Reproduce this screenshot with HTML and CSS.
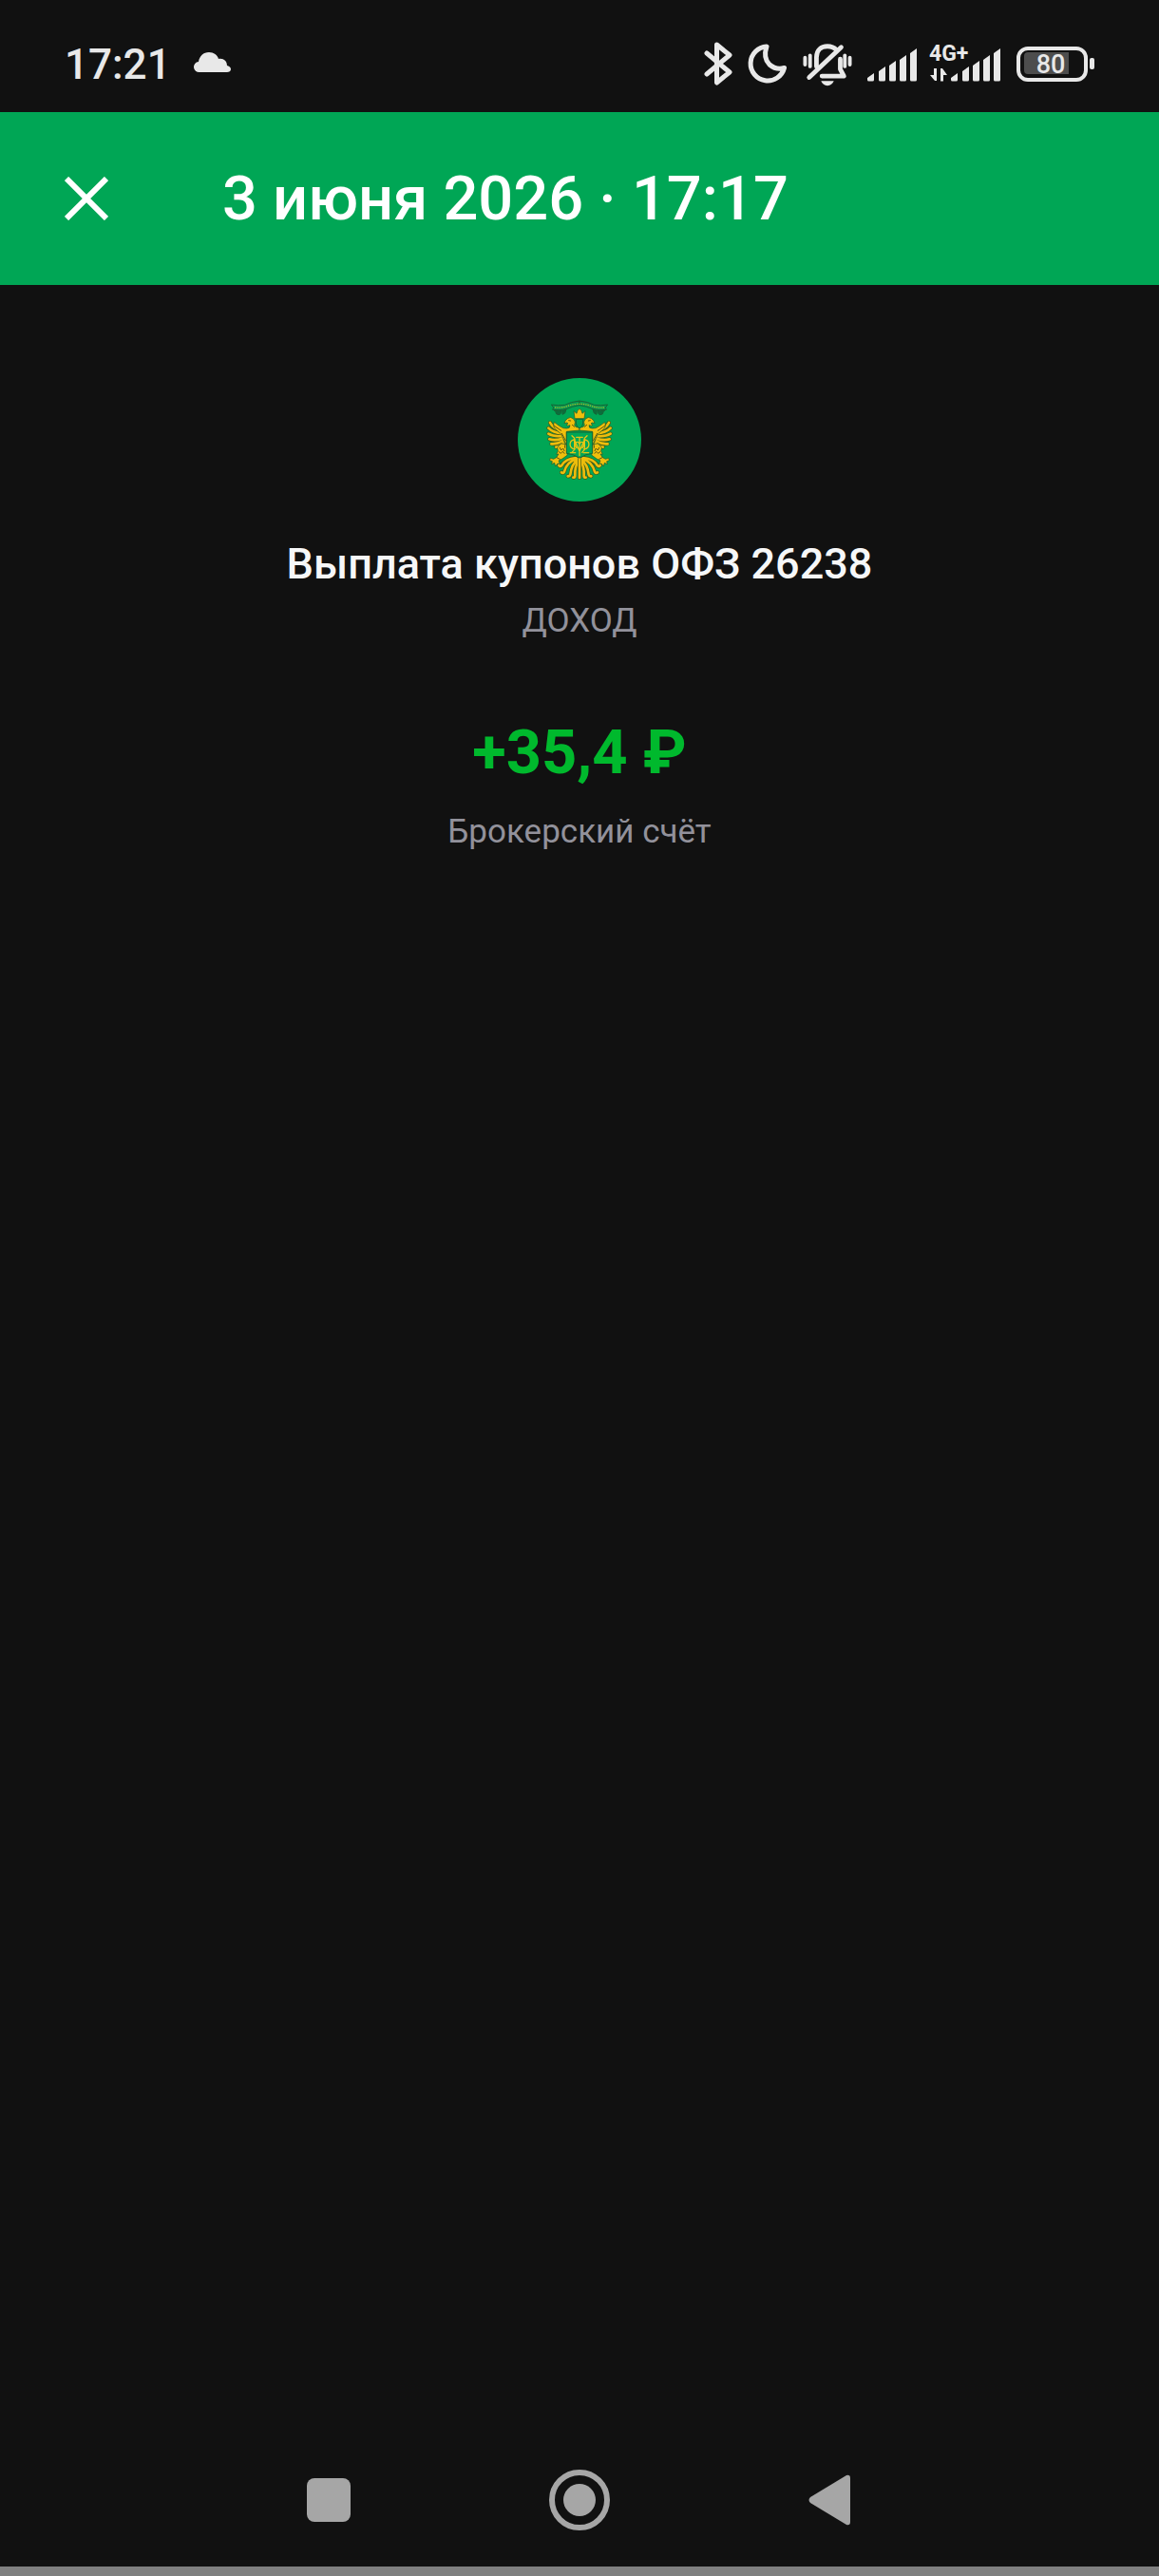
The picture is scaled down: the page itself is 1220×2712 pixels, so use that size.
FILE: index.html
```html
<!DOCTYPE html>
<html lang="ru">
<head>
  <meta charset="UTF-8">
  <meta name="viewport" content="width=device-width, initial-scale=1.0">
  <title>Выплата купонов</title>
  <link rel="stylesheet" href="styles.css">
</head>
<body>
  <!-- Status bar -->
  <div class="status-bar">
    <span class="clock">17:21</span>
    <svg class="cloud" width="40" height="48" viewBox="0 0 40 48">
      <path d="M6 32a5.500 5.500 0 0 1-1-11C6 15 10 11 16 11c5 0 9 3 10 7 5-1 9 2 9 7 3 1 4 2 4 4 0 2-2 3-4 3z"/>
    </svg>

    <div class="status-icons">
      <svg class="line-icon" width="30" height="48" viewBox="0 0 30 48">
        <path d="M3 12l24 20-13.500 11V3L27 14 3 34"/>
      </svg>
      <svg class="line-icon moon" width="42" height="48" viewBox="0 0 42 48">
        <path d="M20 5A18 18 0 1 0 38.500 27.500Q30 30 23 24 16 17 20 5z"/>
      </svg>
      <svg class="line-icon bell" width="52" height="48" viewBox="0 0 54 48">
        <path d="M15 26V16C15 8 20 4 27 4q6 0 10 4M41 18v11l4 7.500H21M7 38L42 5"/>
        <path class="thin" d="M2.500 16.500v7.500M8 14v12M46 14v12M51.500 16.500v7.500"/>
        <path class="solid" d="M20 42h14q-2 5-7 5t-7-5z"/>
      </svg>
      <svg class="signal" width="52" height="48" viewBox="0 0 52 48">
        <path d="M0 38l7-5v7q0 1.500-1.500 1.500h-4Q0 41.500 0 40zM12 31l7-5v14q0 1.500-1.500 1.500h-4Q12 41.500 12 40zM23 25l7-5v20q0 1.500-1.500 1.500h-4Q23 41.500 23 40zM34 19l7-5v26q0 1.500-1.500 1.500h-4Q34 41.500 34 40zM45 12l7-5v33q0 1.500-1.500 1.500h-4Q45 41.500 45 40z"/>
      </svg>
      <svg class="signal network" width="76" height="48" viewBox="0 0 76 48">
        <text x="0" y="20">4G+</text>
        <path d="M5 28h3v13H6l-5-6h4zM12 41.500h3V35h4l-5-7h-2z"/>
        <path d="M23 38l7-5v7q0 1.500-1.500 1.500h-4Q23 41.500 23 40zM35 31l7-5v14q0 1.500-1.500 1.500h-4Q35 41.500 35 40zM46 25l7-5v20q0 1.500-1.500 1.500h-4Q46 41.500 46 40zM57 19l7-5v26q0 1.500-1.500 1.500h-4Q57 41.500 57 40zM68 12l7-5v33q0 1.500-1.500 1.500h-4Q68 41.500 68 40z"/>
      </svg>
      <svg class="battery" width="82" height="48" viewBox="0 0 82 48">
        <rect class="battery-case" x="2" y="7" width="71" height="33" rx="10"/>
        <path class="battery-fill" d="M12 11h43v23H12q-4 0-4-4V15q0-4 4-4z"/>
        <rect class="battery-tip" x="77" y="17" width="5" height="12" rx="2"/>
        <text x="36" y="33">80</text>
      </svg>
    </div>
  </div>

  <!-- Header -->
  <header class="app-header">
    <button class="close-button" type="button" aria-label="Закрыть">
      <svg width="46" height="46" viewBox="0 0 46 46">
        <path d="M2 2l42 42M44 2L2 44"/>
      </svg>
    </button>
    <h1>3 июня 2026 · 17:17</h1>
  </header>

  <!-- Operation details -->
  <main class="operation">
    <svg class="emblem" width="130" height="130" viewBox="45 39 390 390">
      <defs>
        <g id="feathers">
          <path d="M190 206Q158 202 147 180M186 214Q156 212 142 197M186 222Q158 225 142 215M186 230Q162 238 145 232M187 238Q167 249 151 247M190 245Q177 257 166 257"/>
        </g>
        <g id="tail">
          <path d="M236 294Q214 312 211 344q-2 6-8 5M232 293Q199 304 192 335q-3 6-9 2M228 291Q195 294 183 316q-5 4-8-1M238 296Q224 320 226 348q0 6-6 5"/>
        </g>
        <g id="half">
          <use href="#feathers" class="feather-edge"/>
          <use href="#feathers" class="feather"/>
          <path class="gold" d="M160 178q-6 17 8 26l14 12 17 36v-44l41-4v-9q-13 2-16-7 6-11-3-20-9-9-19-1-8 5-10 15l8-2 4 3-5 3 3 4 8-2q1 10-10 10-11 1-19-5-10-6-21-15z"/>
          <path class="gold" d="M181 246l-11 13 2 10-5 11 7-1-7 11-9 5-10-3-2 7 8 3-2 9 9-4 3 11 6-8 8-2-4-8 12-6 15-11 4-20-8-15z"/>
          <path class="ink" d="M178 259l4 8 6-6 4 8M175 272l6 5 6-6 5 6M194 251v8M160 190l22 15M206 173l6 1M217 187l7 6M184 214l12 22M168 290l10 5"/>
          <use href="#tail" class="tail-edge"/>
          <use href="#tail" class="feather"/>
          <path class="banner" d="M151 123q22 4 43 1 18-10 46-13v14q-22 3-42 12-20 5-43 2l3-7z"/>
          <path class="banner-fold" d="M160 141q15 4 24 1-1 8-7 13-12 1-13-10zM186 142l12-4-4 12-8 4z"/>
        </g>
      </defs>
      <circle class="disc" cx="240" cy="234" r="195"/>
      <use href="#half"/>
      <use href="#half" transform="matrix(-1 0 0 1 480 0)"/>
      <path class="gold" d="M222 143l9 8 3-9 6-6 6 6 3 9 9-8-3 24h-30z"/>
      <path class="shield-small" d="M229 169h22v14q-1 10-11 15-10-5-11-15z"/>
      <path class="shield" d="M199 210h82v67q-21 1-41 15-20-14-41-15z"/>
      <path class="monogram" d="M240 226v58M230 226h20M216 221l8 8v36l-8 9M264 221l-8 8v36l-8 9M223 232l17 38M257 232l-17 38M226 234c-21-2-21 30 0 29M254 234c21-2 21 30 0 29M211 275h16M253 275h16M240 247c-8-13-20-2-9 13M240 247c8-13 20-2 9 13"/>
      <path class="tail-edge" d="M240 296v58"/>
      <path class="feather" d="M240 296v58"/>
      <path class="banner-letters" d="M162 132q18 2 35-3 43-16 86 0 17 5 35 3"/>
    </svg>
    <h2>Выплата купонов ОФЗ 26238</h2>
    <p class="caption">ДОХОД</p>
    <p class="amount">+35,4 ₽</p>
    <p class="caption">Брокерский счёт</p>
  </main>

  <!-- System navigation -->
  <nav class="nav-bar">
    <button type="button" aria-label="Недавние">
      <svg width="64" height="64" viewBox="0 0 64 64">
        <rect x="9" y="9" width="46" height="46" rx="8"/>
      </svg>
    </button>
    <button type="button" aria-label="Домой">
      <svg width="64" height="64" viewBox="0 0 64 64">
        <circle class="ring" cx="32" cy="32" r="29"/>
        <circle cx="32" cy="32" r="17"/>
      </svg>
    </button>
    <button type="button" aria-label="Назад">
      <svg width="64" height="64" viewBox="0 0 64 64">
        <path d="M11 29L49 6q4-1 4 3v46q0 4-4 3L11 35q-3-3 0-6z"/>
      </svg>
    </button>
  </nav>
</body>
</html>
```

FILE: styles.css
```css
* {
  box-sizing: border-box;
}

body {
  margin: 0;
  min-height: 100vh;
  display: flex;
  flex-direction: column;
  font-family: Roboto, sans-serif;
  background: #111;
  color: #f6f7f8;
}

h1,
h2,
p {
  margin: 0;
}

svg {
  display: block;
  flex: none;
}

button {
  padding: 0;
  border: none;
  background: none;
  cursor: pointer;
}

/* Status bar */
.status-bar {
  display: flex;
  align-items: center;
  height: 118px;
  padding: 18px 68px 0;
  color: #e8e8e8;
  fill: #e8e8e8;
}

.clock {
  font-size: 44px;
  font-weight: 500;
  line-height: 48px;
}

.cloud {
  margin-left: 24px;
}

.status-icons {
  display: flex;
  gap: 16px;
  margin-left: auto;
}

.line-icon {
  fill: none;
  stroke: #e8e8e8;
  stroke-width: 5;
  stroke-linecap: round;
  stroke-linejoin: round;
}

.line-icon .thin {
  stroke-width: 4;
}

.line-icon .solid {
  fill: #e8e8e8;
  stroke: none;
}

.network {
  margin-left: -3px;
}

.network text {
  font-size: 23px;
  font-weight: 700;
}

.battery-case {
  fill: none;
  stroke: #e8e8e8;
  stroke-width: 4;
}

.battery-fill {
  fill: #4d4d4d;
}

.battery text {
  font-size: 27px;
  font-weight: 500;
  text-anchor: middle;
}

/* Header */
.app-header {
  display: flex;
  align-items: center;
  gap: 120px;
  height: 182px;
  padding: 0 68px;
  background: #00a655;
  color: #fff;
}

.close-button svg {
  stroke: #fff;
  stroke-width: 6;
}

.app-header h1 {
  font-size: 65px;
  font-weight: 500;
  line-height: 80px;
}

/* Operation details */
.operation {
  flex: 1;
  display: flex;
  flex-direction: column;
  align-items: center;
  padding: 98px 32px 0;
  text-align: center;
}

.operation h2 {
  margin: 38px 0 8px;
  font-size: 45px;
  font-weight: 500;
  line-height: 56px;
}

.caption {
  font-size: 35px;
  line-height: 48px;
  color: #92919b;
}

.amount {
  margin: 74px 0 20px;
  font-size: 65px;
  font-weight: 700;
  line-height: 80px;
  color: #00b92d;
}

/* Emblem */
.disc {
  fill: #00a655;
}

.gold {
  fill: #f0bf0c;
  stroke: #235527;
  stroke-width: 2;
}

.feather,
.feather-edge,
.tail-edge,
.ink,
.monogram,
.banner-letters {
  fill: none;
  stroke-linecap: round;
}

.feather {
  stroke: #edbd0c;
  stroke-width: 8;
}

.feather-edge,
.tail-edge {
  stroke: #3d5a1a;
  stroke-width: 12;
}

.ink {
  stroke: #5c5512;
  stroke-width: 3;
}

.banner,
.banner-fold {
  fill: #079b51;
  stroke: #176437;
  stroke-width: 3;
}

.banner-fold {
  fill: #0a6f3d;
}

.banner-letters {
  stroke: #a8b52c;
  stroke-width: 4;
  stroke-linecap: butt;
  stroke-dasharray: 4 3;
}

.shield,
.shield-small {
  fill: #00a655;
  stroke: #176437;
  stroke-width: 3;
}

.monogram {
  stroke: #e5c615;
  stroke-width: 4;
}

/* System navigation */
.nav-bar {
  display: flex;
  justify-content: center;
  align-items: center;
  gap: 200px;
  height: 151px;
  border-bottom: 10px solid #808080;
}

.nav-bar svg {
  fill: #a6a6a6;
}

.nav-bar .ring {
  fill: none;
  stroke: #a6a6a6;
  stroke-width: 6;
}
```
